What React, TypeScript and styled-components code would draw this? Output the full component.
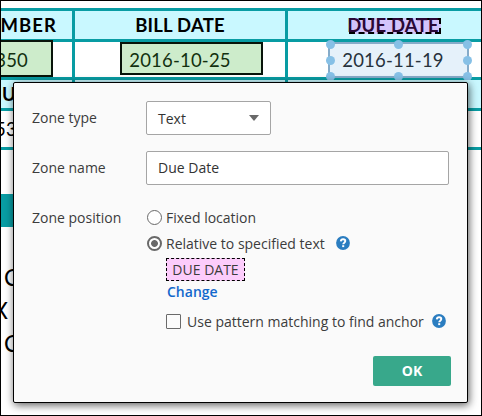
import React, { useState } from "react";
import styled, { createGlobalStyle, css } from "styled-components";

const GlobalStyle = createGlobalStyle`
  * { box-sizing: border-box; }
  body { margin: 0; background: #fff; }
`;

const Frame = styled.main`
  position: relative;
  width: 482px;
  height: 416px;
  overflow: hidden;
  background: #fff;
  border: 1px solid #000;
  font-family: "Open Sans", sans-serif;
`;

/* Scanned invoice */
const Invoice = styled.div`
  width: 500px;
  padding-top: 7px;
  color: #000;
  font-family: Lato, "Liberation Sans", sans-serif;
`;

const Row = styled.div<{ $head?: boolean; $height: number }>`
  display: grid;
  grid-template-columns: 71px 210px 210px;
  column-gap: 3px;
  height: ${(p) => p.$height}px;
  border-top: 3px solid #089ca3;
  background: #089ca3;
  font-size: 18.5px;
  font-weight: ${(p) => (p.$head ? 700 : 400)};
  > div { background: ${(p) => (p.$head ? "#c9f8ff" : "#fff")}; }
`;

const Cell = styled.div<{ $align?: string }>`
  position: relative;
  display: flex;
  align-items: center;
  justify-content: ${(p) => p.$align || "center"};
  white-space: nowrap;
  line-height: 20px;
`;

const CellText = styled.span<{ $spacing?: number; $right?: number; $shift?: number; $color?: string }>`
  z-index: 1;
  color: ${(p) => p.$color || "#000"};
  letter-spacing: ${(p) => p.$spacing ?? 0.2}px;
  margin-right: ${(p) => p.$right || 0}px;
  margin-left: ${(p) => p.$shift || 0}px;
`;

const Zone = styled.div<{ $left: number; $top: number; $width: number; $height: number }>`
  position: absolute;
  left: ${(p) => p.$left}px;
  top: ${(p) => p.$top}px;
  width: ${(p) => p.$width}px;
  height: ${(p) => p.$height}px;
  border: 2px solid #08140a;
  background: #cdeccb;
`;

const AnchorMark = styled.div`
  position: absolute;
  left: 61px;
  top: 7px;
  width: 92px;
  height: 16px;
  border: 2px dashed #000;
  background: #d3c4fb;
`;

const Selection = styled.div`
  position: absolute;
  left: 40px;
  top: 0;
  width: 141px;
  height: 36px;
  border: 2px solid #85abc9;
  background: #e5f1fa;
`;

const Handle = styled.i<{ $x: number; $y: number }>`
  position: absolute;
  left: ${(p) => p.$x}%;
  top: ${(p) => p.$y}%;
  width: 9px;
  height: 9px;
  margin: -4.5px;
  border-radius: 50%;
  background: #86c0e6;
`;

const TableEnd = styled.div`
  height: 3px;
  background: #089ca3;
`;

const Band = styled.div`
  width: 60px;
  height: 33px;
  margin-top: 44px;
  background: #089ca3;
`;

const Address = styled.div`
  padding-top: 34px;
  font-size: 23px;
  line-height: 33px;
`;

const AddressLine = styled.div<{ $indent: number }>`
  margin-left: ${(p) => p.$indent}px;
  height: 33px;
`;

/* Dialog */
const Dialog = styled.section`
  position: absolute;
  left: 12px;
  top: 81px;
  width: 455px;
  height: 321px;
  padding: 18px 16px 16px 18px;
  border: 1px solid #000;
  border-radius: 2px;
  background: #fafafa;
  box-shadow: 1px 2px 9px rgba(0, 0, 0, 0.65);
  color: #3c3c3c;
  font-size: 14px;
  z-index: 2;
`;

const Field = styled.div`
  display: grid;
  grid-template-columns: 114px 1fr;
  height: 34px;
  margin-bottom: 16px;
  line-height: 34px;
`;

const control = css`
  height: 34px;
  padding: 0 11px;
  border: 1px solid #a5a5a5;
  border-radius: 2px;
  background: #fff;
  color: #333;
  font: 14px "Open Sans", sans-serif;
`;

const Select = styled.button`
  ${control}
  width: 125px;
  display: flex;
  align-items: center;
  justify-content: space-between;
`;

const Input = styled.input`
  ${control}
  width: 303px;
  padding-bottom: 2px;
  outline: none;
`;

const Position = styled.div`
  display: grid;
  grid-template-columns: 114px 1fr;
`;

const PositionLabel = styled.div`
  line-height: 34px;
`;

const Options = styled.div`
  padding-top: 3px;
`;

const Option = styled.label`
  display: flex;
  align-items: center;
  height: 26px;
`;

const Radio = styled.i<{ $on: boolean }>`
  width: 15px;
  height: 15px;
  margin: 0 4px 0 1px;
  border: ${(p) => (p.$on ? 2 : 1)}px solid #696969;
  border-radius: 50%;
  background: ${(p) => (p.$on ? "radial-gradient(circle, #696969 0 3px, #fff 3.8px)" : "#fff")};
`;

const Anchor = styled.div`
  width: 79px;
  height: 23px;
  margin: 2px 0 0 20px;
  border: 1px dashed #000;
  background: #fcccfb;
  text-align: center;
  line-height: 21px;
`;

const Change = styled.a`
  display: block;
  margin: 1px 0 0 21px;
  color: #1268cc;
  font-weight: 600;
  line-height: 20px;
`;

const Pattern = styled.label`
  display: flex;
  align-items: center;
  height: 20px;
  margin: 9px 0 0 20px;
  white-space: nowrap;
`;

const Box = styled.i`
  width: 15px;
  height: 15px;
  margin-right: 6px;
  border: 1px solid #6a6a6a;
  border-radius: 1px;
  background: #fbfbfb;
`;

const HelpIcon = styled.svg<{ $gap: number }>`
  width: 14px;
  height: 14px;
  margin-left: ${(p) => p.$gap}px;
`;

const Ok = styled.button`
  display: block;
  width: 78px;
  height: 30px;
  margin: 25px 0 0 auto;
  padding: 0;
  border: 0;
  border-radius: 2px;
  background: #38a88b;
  color: #fff;
  font: 700 14px/30px "Open Sans", sans-serif;
`;

const Help = ({ gap }: { gap: number }) => (
  <HelpIcon $gap={gap} viewBox="0 0 14 14">
    <circle cx="7" cy="7" r="6.9" fill="#2b7dc0" />
    <path d="M4.8 5.4C4.9 4 5.8 3.3 7.1 3.3c1.3 0 2.2.7 2.2 1.8C9.3 6.7 7.2 6.6 7.2 8.3" fill="none" stroke="#fff" strokeWidth="1.9" />
    <rect x="6.2" y="9.2" width="2" height="1.9" fill="#fff" />
  </HelpIcon>
);

const handles = [[0, 0], [50, 0], [100, 0], [0, 50], [100, 50], [0, 100], [50, 100], [100, 100]];

export default function App() {
  const [name, setName] = useState("Due Date");
  return (
    <>
      <GlobalStyle />
      <Frame>
        <Invoice>
          <Row $head $height={31}>
            <Cell $align="flex-end"><CellText $spacing={1.1} $right={15}>NUMBER</CellText></Cell>
            <Cell><CellText>BILL DATE</CellText></Cell>
            <Cell><AnchorMark /><CellText $color="#2a0838">DUE DATE</CellText></Cell>
          </Row>
          <Row $height={38}>
            <Cell $align="flex-end">
              <Zone $left={-5} $top={-2} $width={57} $height={37} />
              <CellText $right={44} $color="#12300f">12350</CellText>
            </Cell>
            <Cell>
              <Zone $left={45} $top={0} $width={143} $height={33} />
              <CellText $color="#12300f">2016-10-25</CellText>
            </Cell>
            <Cell>
              <Selection>{handles.map(([x, y]) => <Handle key={`${x}-${y}`} $x={x} $y={y} />)}</Selection>
              <CellText $color="#27323c">2016-11-19</CellText>
            </Cell>
          </Row>
          <Row $head $height={31}>
            <Cell $align="flex-start"><CellText $shift={1}>U</CellText></Cell>
            <Cell /><Cell />
          </Row>
          <Row $height={39}>
            <Cell $align="flex-start"><CellText $shift={-6}>53</CellText></Cell>
            <Cell /><Cell />
          </Row>
          <TableEnd />
          <Band />
          <Address>
            <AddressLine $indent={3}>C</AddressLine>
            <AddressLine $indent={-8}>X</AddressLine>
            <AddressLine $indent={3}>C</AddressLine>
          </Address>
        </Invoice>

        <Dialog>
          <Field>
            <span>Zone type</span>
            <Select>
              Text
              <svg width="10" height="6" viewBox="0 0 10 6"><path d="M0 0H10L5 6Z" fill="#696969" /></svg>
            </Select>
          </Field>
          <Field>
            <span>Zone name</span>
            <Input value={name} onChange={(e) => setName(e.target.value)} />
          </Field>
          <Position>
            <PositionLabel>Zone position</PositionLabel>
            <Options>
              <Option><Radio $on={false} />Fixed location</Option>
              <Option><Radio $on />Relative to specified text<Help gap={11} /></Option>
              <Anchor>DUE DATE</Anchor>
              <Change>Change</Change>
              <Pattern><Box />Use pattern matching to find anchor<Help gap={8} /></Pattern>
            </Options>
          </Position>
          <Ok>OK</Ok>
        </Dialog>
      </Frame>
    </>
  );
}
